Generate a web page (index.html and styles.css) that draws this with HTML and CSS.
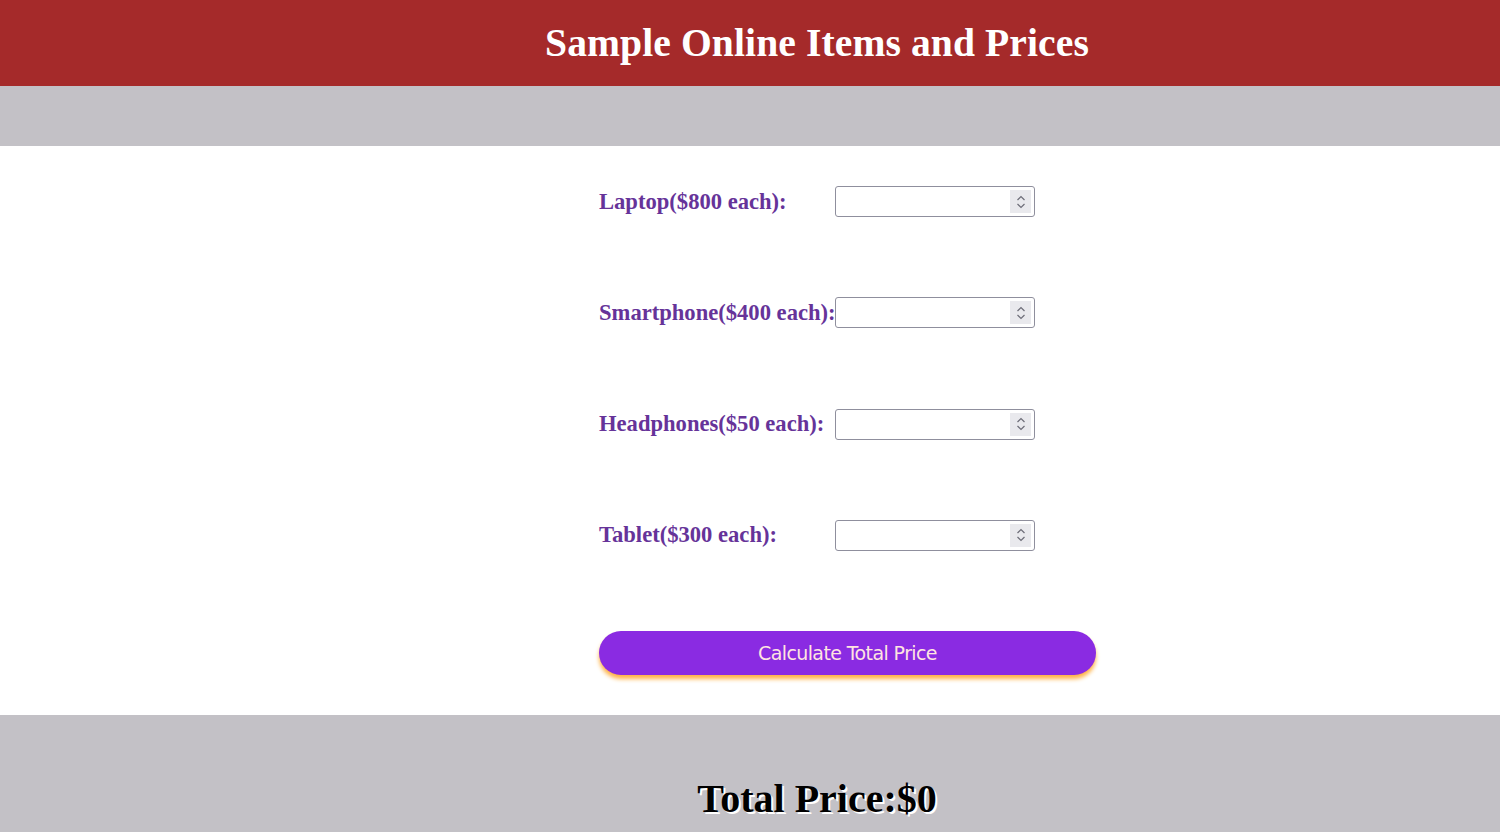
FILE: index.html
```html
<!DOCTYPE html>
<html>
<head>
<meta charset="utf-8">
<title>Sample Online Items and Prices</title>
<link rel="stylesheet" href="styles.css">
</head>
<body>
<header class="top">
  <h1 class="title">Sample Online Items and Prices</h1>
</header>
<div class="band"></div>
<main class="content">
  <form class="order">
    <div class="row">
      <label class="lbl" for="laptop">Laptop($800 each):</label>
      <div class="field"><input id="laptop" type="number" class="num"><span class="spin"><svg width="12" height="18" viewBox="0 0 12 18"><path d="M2.5 7 L6 3.5 L9.5 7 M2.5 11 L6 14.5 L9.5 11" fill="none" stroke="#6d6d78" stroke-width="1.2"/></svg></span></div>
    </div>
    <div class="row">
      <label class="lbl" for="phone">Smartphone($400 each):</label>
      <div class="field"><input id="phone" type="number" class="num"><span class="spin"><svg width="12" height="18" viewBox="0 0 12 18"><path d="M2.5 7 L6 3.5 L9.5 7 M2.5 11 L6 14.5 L9.5 11" fill="none" stroke="#6d6d78" stroke-width="1.2"/></svg></span></div>
    </div>
    <div class="row">
      <label class="lbl" for="head">Headphones($50 each):</label>
      <div class="field"><input id="head" type="number" class="num"><span class="spin"><svg width="12" height="18" viewBox="0 0 12 18"><path d="M2.5 7 L6 3.5 L9.5 7 M2.5 11 L6 14.5 L9.5 11" fill="none" stroke="#6d6d78" stroke-width="1.2"/></svg></span></div>
    </div>
    <div class="row">
      <label class="lbl" for="tablet">Tablet($300 each):</label>
      <div class="field"><input id="tablet" type="number" class="num"><span class="spin"><svg width="12" height="18" viewBox="0 0 12 18"><path d="M2.5 7 L6 3.5 L9.5 7 M2.5 11 L6 14.5 L9.5 11" fill="none" stroke="#6d6d78" stroke-width="1.2"/></svg></span></div>
    </div>
    <button type="button" class="calc">Calculate Total Price</button>
  </form>
</main>
<footer class="bottom">
  <h2 class="total">Total Price:$0</h2>
</footer>
</body>
</html>
```

FILE: styles.css
```css
html, body {
  margin: 0;
  padding: 0;
  background: #ffffff;
  font-family: "Liberation Serif", "Times New Roman", serif;
  overflow: hidden;
}
.top {
  background: #a52a2a;
  height: 86px;
  display: flex;
  align-items: center;
  justify-content: center;
  padding-left: 134px;
}
.title {
  margin: 0;
  color: #ffffff;
  font-size: 39.6px;
  font-weight: bold;
  letter-spacing: 0.1px;
}
.band {
  background: #c3c1c6;
  height: 60px;
}
.content {
  height: 569px;
  box-sizing: border-box;
  padding: 40px 0 0 599px;
}
.order {
  display: flex;
  flex-direction: column;
  gap: 80px;
  width: 497px;
}
.row {
  display: flex;
  align-items: center;
  height: 31px;
}
.row + .row { margin-top: 0.3px; }
.lbl {
  width: 236px;
  flex: none;
  white-space: nowrap;
  color: #663399;
  font-size: 22.6px;
  font-weight: bold;
}
.field {
  position: relative;
  width: 200px;
  height: 31px;
}
.num {
  box-sizing: border-box;
  width: 200px;
  height: 31px;
  margin: 0;
  border: 1px solid #8f8f9d;
  border-radius: 3px;
  background: #fff;
  -moz-appearance: textfield;
  appearance: textfield;
}
.num::-webkit-inner-spin-button,
.num::-webkit-outer-spin-button {
  -webkit-appearance: none;
  margin: 0;
}
.spin {
  position: absolute;
  top: 4px;
  right: 4px;
  width: 21px;
  height: 23px;
  background: #e9e9ed;
  display: flex;
  align-items: center;
  justify-content: center;
  pointer-events: none;
}
.calc {
  margin-top: 0;
  width: 497px;
  height: 44px;
  border: none;
  border-radius: 22px;
  background: #8a2be2;
  color: #ffe4e1;
  font-family: "DejaVu Sans", Verdana, sans-serif;
  font-size: 19px;
  letter-spacing: -0.6px;
  padding-top: 1px;
  box-shadow: 0 4px 4px #ffb347;
  cursor: pointer;
}
.bottom {
  background: #c3c1c6;
  height: 117px;
  display: flex;
  justify-content: center;
  padding-left: 134px;
}
.total {
  margin: 60px 0 0 0;
  font-size: 40px;
  font-weight: bold;
  color: #000;
  text-shadow: 2px 2px 0 #ffffff;
}
```
